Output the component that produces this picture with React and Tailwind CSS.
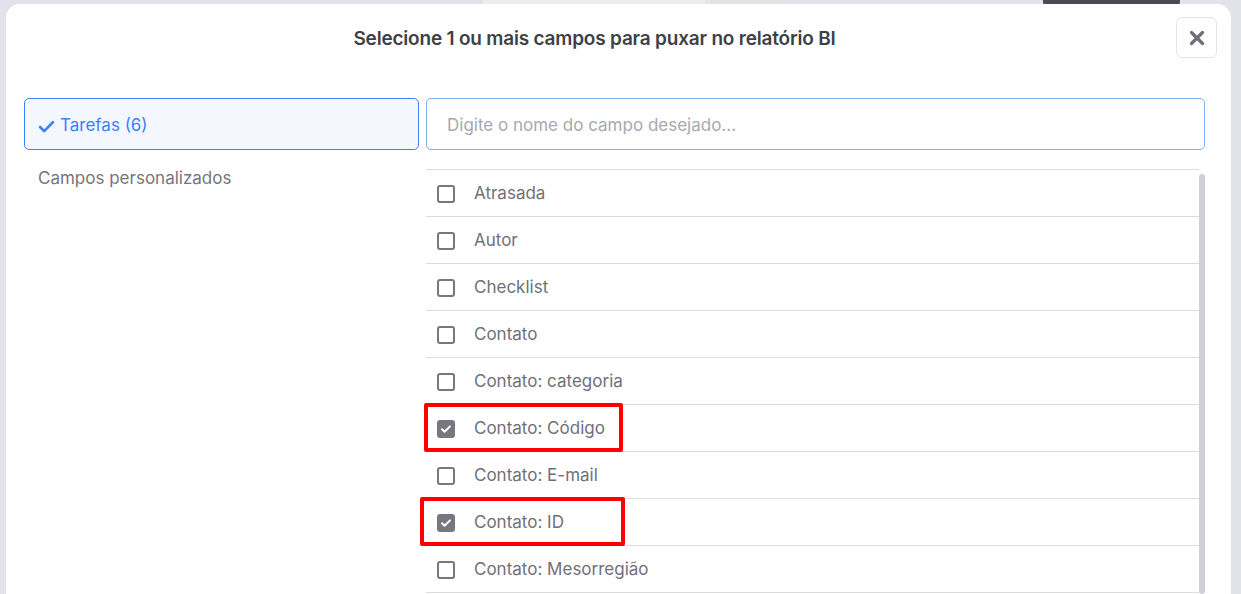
import { useState } from "react";

const CAMPOS = [
  { nome: "Atrasada", marcado: false },
  { nome: "Autor", marcado: false },
  { nome: "Checklist", marcado: false },
  { nome: "Contato", marcado: false },
  { nome: "Contato: categoria", marcado: false },
  { nome: "Contato: Código", marcado: true, destaque: "w-[199px] -left-[2px]" },
  { nome: "Contato: E-mail", marcado: false },
  { nome: "Contato: ID", marcado: true, destaque: "w-[205px] -left-[6px]" },
  { nome: "Contato: Mesorregião", marcado: false },
];

function Checkbox({ checked }) {
  if (checked) {
    return (
      <span className="w-[18px] h-[18px] rounded-[3px] bg-[#77777f] flex items-center justify-center shrink-0">
        <svg width="12" height="12" viewBox="0 0 12 12" fill="none">
          <path d="M2 6.2l2.6 2.6L10 3.4" stroke="#fff" strokeWidth="2" strokeLinecap="round" strokeLinejoin="round" />
        </svg>
      </span>
    );
  }
  return <span className="w-[18px] h-[18px] rounded-[3px] border-2 border-[#77777f] bg-white shrink-0" />;
}

export default function App() {
  const [campos, setCampos] = useState(CAMPOS);
  const [aba, setAba] = useState("tarefas");

  function toggle(i) {
    setCampos(campos.map((c, j) => (j === i ? { ...c, marcado: !c.marcado } : c)));
  }

  return (
    <div className="w-[1241px] h-[594px] overflow-hidden bg-[#e2e3ea] relative font-['Inter',sans-serif]">
      {/* pedaços da página por trás do modal */}
      <div className="absolute top-0 left-[483px] w-[297px] h-[8px] bg-[#ececf0] flex justify-end">
        <div className="w-[75px] h-full bg-[#e3e3e8]" />
      </div>
      <div className="absolute top-0 left-[1043px] w-[137px] h-[8px] rounded-b-[6px] bg-[#4a4a50]" />

      <div className="absolute top-[4px] left-[6px] right-[10px] bottom-0 bg-white rounded-t-[14px] flex flex-col">
        <div className="h-[94px] flex items-start relative">
          <h2 className="flex-1 text-center pt-[21px] pr-[48px] text-[19px] font-semibold text-[#3f3f46] tracking-[-0.2px]">
            Selecione 1 ou mais campos para puxar no relatório BI
          </h2>
          <button className="absolute right-[14px] top-[13px] w-[41px] h-[41px] rounded-[6px] border border-[#e4e4e9] flex items-center justify-center">
            <svg width="16" height="16" viewBox="0 0 16 16">
              <path d="M2.5 2.5l11 11M13.5 2.5l-11 11" stroke="#6e6e76" strokeWidth="3.2" strokeLinecap="round" />
            </svg>
          </button>
        </div>

        <div className="flex gap-[7px] pl-[18px] pr-[26px] min-h-0 flex-1">
          <div className="w-[395px] shrink-0 flex flex-col">
            <button
              onClick={() => setAba("tarefas")}
              className="h-[52px] rounded-[5px] border border-[#3b82f6] bg-[#f5f7ff] flex items-center gap-[5px] pl-[13px] pt-[4px] text-[17px] text-[#3b82f6]"
            >
              <svg width="17" height="17" viewBox="0 0 16 16">
                <path d="M2 8.5l3.8 3.8L14 4" stroke="#3b82f6" strokeWidth="2.5" fill="none" strokeLinecap="round" strokeLinejoin="round" />
              </svg>
              Tarefas (6)
            </button>
            <button onClick={() => setAba("personalizados")} className="text-left pl-[14px] pt-[16px] text-[17px] text-[#75757c]">
              Campos personalizados
            </button>
          </div>

          <div className="flex-1 flex flex-col min-w-0">
            <div className="h-[52px] rounded-[5px] border border-[#7fb0f8] flex items-center pl-[20px] pt-[4px]">
              <input
                autoFocus
                placeholder="Digite o nome do campo desejado..."
                className="w-full outline-none text-[17px] text-[#3f3f46] placeholder:text-[#a8a8b0] bg-transparent"
              />
            </div>

            <div className="mt-[19px] flex flex-1 min-h-0">
              <div className="flex-1 border-t border-[#dcdcdf]">
                {campos.map((c, i) => (
                  <div
                    key={c.nome}
                    onClick={() => toggle(i)}
                    className="h-[47px] border-b border-[#dcdcdf] flex items-center gap-[19px] pl-[11px] pt-[2px] text-[17px] text-[#707078] relative cursor-pointer"
                  >
                    <Checkbox checked={c.marcado} />
                    <span>{c.nome}</span>
                    {c.destaque && (
                      <div className={`absolute -top-[2px] -bottom-[1px] border-[4px] border-[#ff0000] rounded-[2px] ${c.destaque}`} />
                    )}
                  </div>
                ))}
              </div>
              <div className="w-[6px] mt-[5px] rounded-full bg-[#cfcfd8]" />
            </div>
          </div>
        </div>
      </div>
    </div>
  );
}
